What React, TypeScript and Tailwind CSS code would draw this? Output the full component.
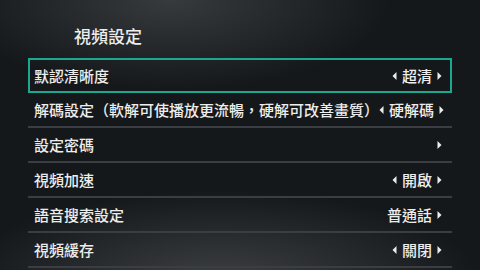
type Row = { label: string; value?: string; left?: boolean; right?: boolean; selected?: boolean }

const rows: Row[] = [
  { label: '默認清晰度', value: '超清', left: true, right: true, selected: true },
  { label: '解碼設定（軟解可使播放更流暢，硬解可改善畫質）', value: '硬解碼', left: true, right: true },
  { label: '設定密碼', right: true },
  { label: '視頻加速', value: '開啟', left: true, right: true },
  { label: '語音搜索設定', value: '普通話', right: true },
  { label: '視頻緩存', value: '關閉', left: true, right: true },
]

function Tri({ dir }: { dir: 'left' | 'right' }) {
  return (
    <svg width="5" height="8" viewBox="0 0 5 8" className="shrink-0">
      <polygon points={dir === 'left' ? '4.5,0 4.5,8 0.5,4' : '0.5,0 0.5,8 4.5,4'} fill="#ececec" />
    </svg>
  )
}

export default function App() {
  return (
    <div
      className="relative h-[270px] w-[480px] overflow-hidden bg-[#15181b] text-[#ededed]"
      style={{ fontFamily: '"Noto Sans CJK TC", "Noto Sans", sans-serif' }}
    >
      <div className="pointer-events-none absolute inset-0 bg-[radial-gradient(ellipse_220px_90px_at_170px_0px,rgba(120,122,125,0.35),transparent)]" />
      <div className="pointer-events-none absolute inset-0 bg-[radial-gradient(ellipse_260px_90px_at_220px_280px,rgba(120,122,125,0.4),transparent)]" />
      <div className="relative flex flex-col">
        <h1 className="ml-[74px] mt-[24px] h-[24px] text-[17px] leading-[24px] font-medium">視頻設定</h1>
        <div className="ml-[28px] mt-[10px] flex w-[424px] flex-col">
          {rows.map((r) => (
            <div
              key={r.label}
              className={
                r.selected
                  ? 'flex h-[35px] items-center justify-between border-2 border-[#1ba88e] pl-[4px] pr-[8px]'
                  : 'flex h-[35px] items-center justify-between border-b-2 border-[#3a3d41] pl-[6px] pr-[10px]'
              }
            >
              <span className="whitespace-nowrap text-[15px] font-medium leading-none">{r.label}</span>
              <div className="flex items-center">
                {r.left && <Tri dir="left" />}
                {r.value && <span className="ml-[5px] mr-[5px] whitespace-nowrap text-[15px] font-medium leading-none">{r.value}</span>}
                {r.right && <Tri dir="right" />}
              </div>
            </div>
          ))}
        </div>
      </div>
    </div>
  )
}
